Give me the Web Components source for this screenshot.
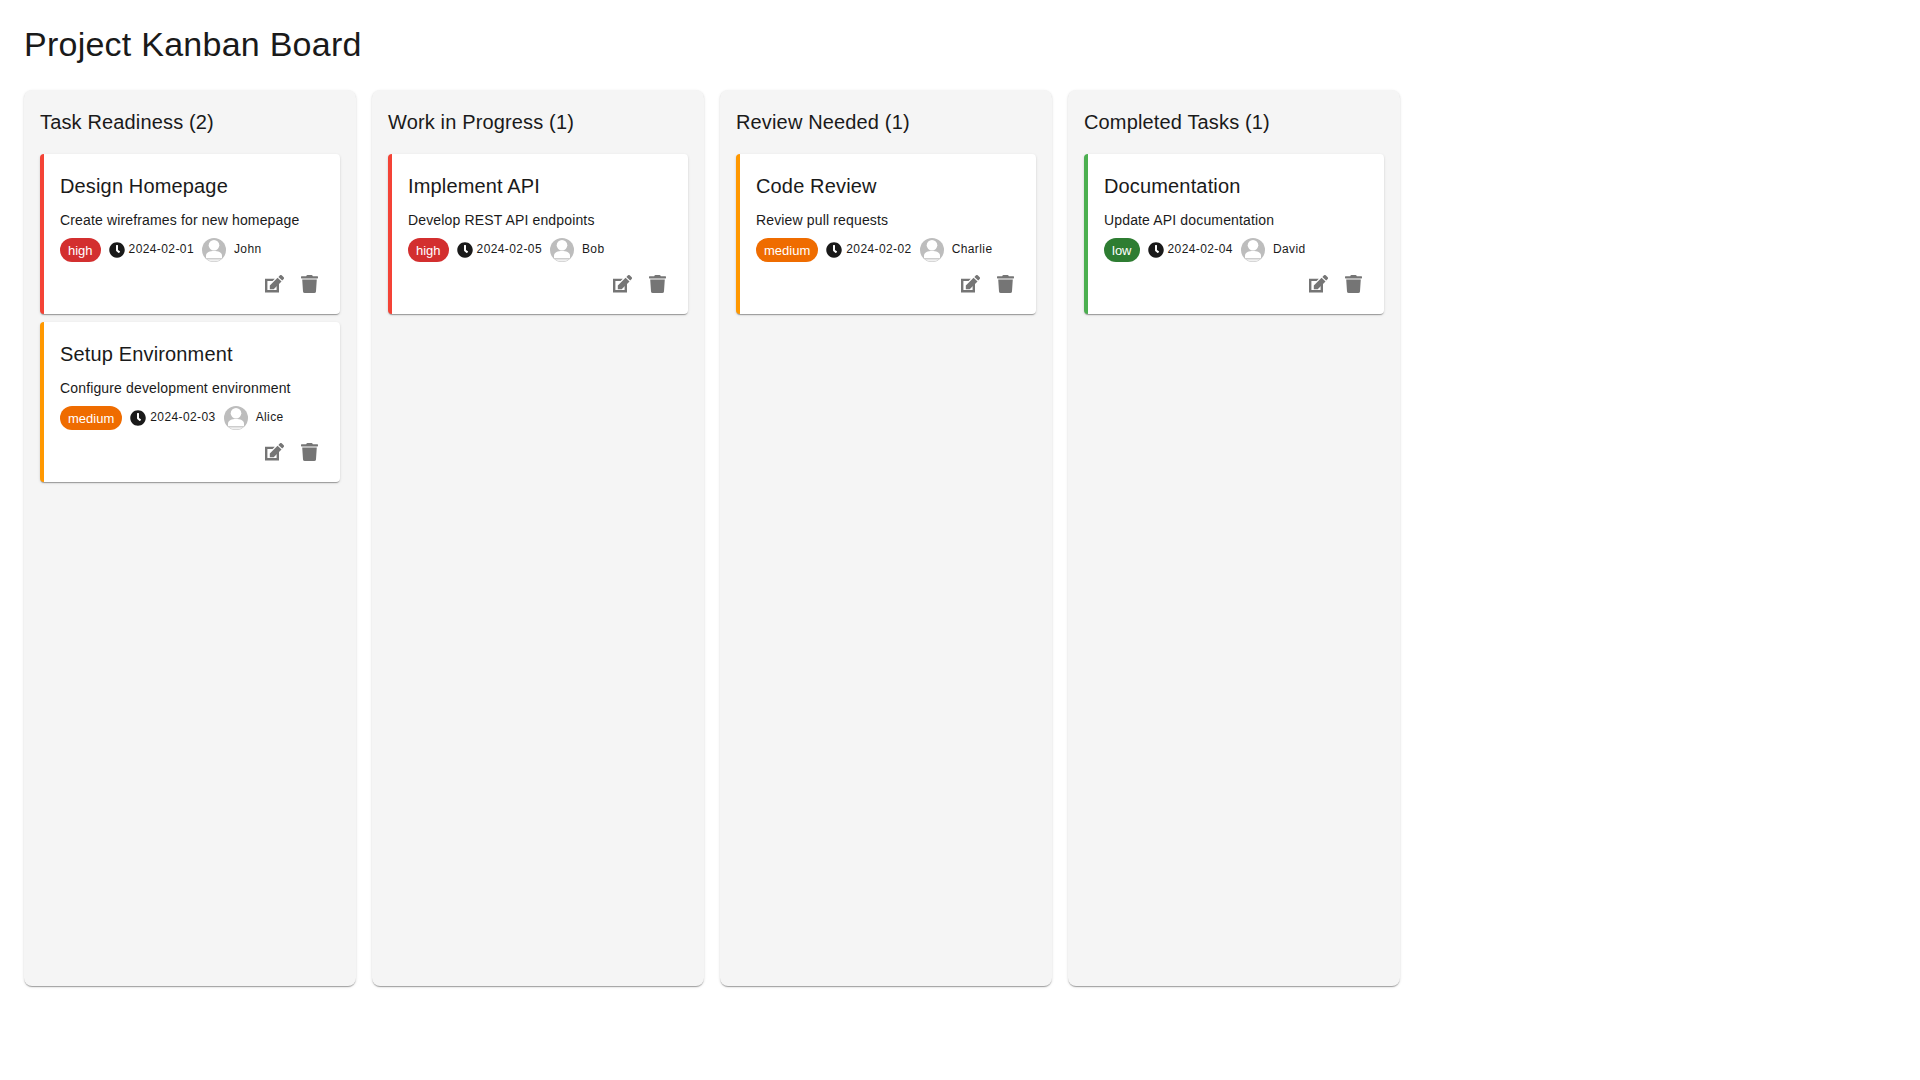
<!DOCTYPE html>
<html lang="en"><head><meta charset="utf-8"><title>Project Kanban Board</title>
<style>
html,body{margin:0;padding:0;background:#fff}
body{font-family:"Liberation Sans",Arial,sans-serif;color:#1a1a1a}
</style></head><body>
<kanban-board heading="Project Kanban Board">
  <kanban-column heading="Task Readiness (2)">
    <task-card heading="Design Homepage" desc="Create wireframes for new homepage" priority="high" date="2024-02-01" who="John"></task-card>
    <task-card heading="Setup Environment" desc="Configure development environment" priority="medium" date="2024-02-03" who="Alice"></task-card>
  </kanban-column>
  <kanban-column heading="Work in Progress (1)">
    <task-card heading="Implement API" desc="Develop REST API endpoints" priority="high" date="2024-02-05" who="Bob"></task-card>
  </kanban-column>
  <kanban-column heading="Review Needed (1)">
    <task-card heading="Code Review" desc="Review pull requests" priority="medium" date="2024-02-02" who="Charlie"></task-card>
  </kanban-column>
  <kanban-column heading="Completed Tasks (1)">
    <task-card heading="Documentation" desc="Update API documentation" priority="low" date="2024-02-04" who="David"></task-card>
  </kanban-column>
</kanban-board>
<script>
const esc=s=>String(s).replace(/[&<>"]/g,c=>({'&':'&amp;','<':'&lt;','>':'&gt;','"':'&quot;'}[c]));
class KanbanBoard extends HTMLElement{
  connectedCallback(){
    if(this.shadowRoot)return;
    this.attachShadow({mode:'open'}).innerHTML=`<style>
:host{display:block;padding:24px}
h1{margin:0 0 26px;font-size:34px;line-height:40px;font-weight:400;letter-spacing:.00735em}
.cols{display:flex;gap:16px;align-items:stretch}
</style><h1>${esc(this.getAttribute('heading'))}</h1><div class="cols"><slot></slot></div>`;
  }
}
class KanbanColumn extends HTMLElement{
  connectedCallback(){
    if(this.shadowRoot)return;
    this.attachShadow({mode:'open'}).innerHTML=`<style>
:host{display:block;box-sizing:border-box;width:332px;height:896px;padding:16px;background:#f5f5f5;border-radius:8px;
box-shadow:0 2px 1px -1px rgba(0,0,0,.2),0 1px 1px 0 rgba(0,0,0,.14),0 1px 3px 0 rgba(0,0,0,.12)}
h2{margin:0 0 16px;font-size:20px;line-height:32px;font-weight:400;letter-spacing:.0075em}
.list{display:flex;flex-direction:column;gap:8px}
</style><h2>${esc(this.getAttribute('heading'))}</h2><div class="list"><slot></slot></div>`;
  }
}
const ACCENT={high:'#f44336',medium:'#ff9800',low:'#4caf50'};
const CHIP={high:'#d32f2f',medium:'#ef6c00',low:'#2e7d32'};
class TaskCard extends HTMLElement{
  connectedCallback(){
    if(this.shadowRoot)return;
    const a=n=>esc(this.getAttribute(n)||''),p=this.getAttribute('priority');
    this.attachShadow({mode:'open'}).innerHTML=`<style>
:host{display:block;box-sizing:border-box;height:160px;padding:16px 16px 12px;background:#fff;border-left:4px solid ${ACCENT[p]};border-radius:4px;
box-shadow:0 2px 1px -1px rgba(0,0,0,.2),0 1px 1px 0 rgba(0,0,0,.14),0 1px 3px 0 rgba(0,0,0,.12)}
h3{margin:0 0 8px;font-size:20px;line-height:32px;font-weight:400;letter-spacing:.0075em}
p{margin:0 0 8px;font-size:14px;line-height:20px;letter-spacing:.01071em}
.meta{display:flex;align-items:center;gap:8px;height:24px}
.chip{height:24px;box-sizing:border-box;padding:0 8px;border-radius:12px;background:${CHIP[p]};color:#fff;font-size:13px;line-height:25px}
.date{display:flex;align-items:center;gap:4px;font-size:12px;letter-spacing:.03333em;line-height:20px}
.date span,.name{position:relative;top:-1px}
svg{display:block;fill:currentColor}
.who{display:flex;align-items:center;gap:8px;font-size:12px;letter-spacing:.03333em;line-height:20px}
.actions{display:flex;justify-content:flex-end;margin:4px -4px 0 0}
button{all:unset;width:36px;height:36px;display:flex;align-items:center;justify-content:center;color:#757575}
.trash{margin-left:-1px}
</style>
<h3>${a('heading')}</h3><p>${a('desc')}</p>
<div class="meta"><span class="chip">${esc(p)}</span>
<div class="date"><svg width="16" height="16" viewBox="0 0 512 512"><path d="M256,8C119,8,8,119,8,256S119,504,256,504,504,393,504,256,393,8,256,8Zm92.49,313h0l-20,25a16,16,0,0,1-22.49,2.5h0l-67-49.72a40,40,0,0,1-15-31.23V112a16,16,0,0,1,16-16h32a16,16,0,0,1,16,16V256l58,42.5A16,16,0,0,1,348.49,321Z"/></svg><span>${a('date')}</span></div>
<div class="who"><svg width="24" height="24" viewBox="0 0 24 24"><circle cx="12" cy="12" r="12" fill="#bdbdbd"/><circle cx="12" cy="7.3" r="5.3" fill="#fff"/><path d="M4 20.2v-2.6C4 14 8 12.9 12 12.9s8 1.1 8 4.7v2.6z" fill="#fff"/><path d="M4.6 21.2h14.8A11.6 11.6 0 0 1 12 23.6a11.6 11.6 0 0 1-7.4-2.4z" fill="#f0f0f0"/></svg><span class="name">${a('who')}</span></div></div>
<div class="actions"><button aria-label="Edit"><svg width="19" height="18" viewBox="0 .5 19 18"><path d="M0 4.2H9.8L7.6 6.4H2.4v9.2h9.2V11l2.4-2.4V18H0z"/><path d="M4.8 14.8v-3.8L12.6 3.2l3.9 3.9-7.8 7.7z"/><path d="M13.4 2.4l1.6-1.6a1.2 1.2 0 0 1 1.7 0l2 2a1.2 1.2 0 0 1 0 1.7l-1.5 1.6z"/></svg></button>
<button aria-label="Delete"><svg class="trash" width="17" height="18" viewBox="0 0 448 512" preserveAspectRatio="none"><path d="M432 32H312l-9.4-18.7A24 24 0 0 0 281.1 0H166.8a23.72 23.72 0 0 0-21.4 13.3L136 32H16A16 16 0 0 0 0 48v32a16 16 0 0 0 16 16h416a16 16 0 0 0 16-16V48a16 16 0 0 0-16-16zM53.2 467a48 48 0 0 0 47.9 45h245.8a48 48 0 0 0 47.9-45L416 128H32z"/></svg></button></div>`;
  }
}
customElements.define('kanban-board',KanbanBoard);
customElements.define('kanban-column',KanbanColumn);
customElements.define('task-card',TaskCard);
</script>
</body></html>
